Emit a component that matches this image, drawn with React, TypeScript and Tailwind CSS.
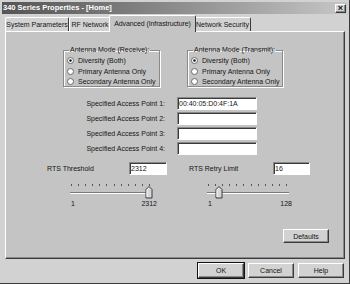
const FONT = "font-['Liberation_Sans',Arial,sans-serif]";

const raised =
  "border border-t-white border-l-white border-r-[#3a3a3a] border-b-[#3a3a3a] shadow-[inset_-1px_-1px_0_#8a8a8a]";
const sunken =
  "border border-t-[#8a8a8a] border-l-[#8a8a8a] border-r-white border-b-white shadow-[inset_1px_1px_0_#3a3a3a] bg-white";

const TABS = [
  { label: "System Parameters", w: "w-[64px]" },
  { label: "RF Network", w: "w-[42px]" },
  { label: "Advanced (Infrastructure)", w: "w-[87px]", active: true },
  { label: "Network Security", w: "w-[57px]" },
];

const RADIOS = ["Diversity (Both)", "Primary Antenna Only", "Secondary Antenna Only"];

function Radio({ checked }: { checked?: boolean }) {
  return (
    <svg width="7" height="7" viewBox="0 0 7 7" className="shrink-0">
      <circle cx="3.5" cy="3.5" r="3" fill="#fff" stroke="#6a6a6a" strokeWidth="1" />
      {checked && <circle cx="3.5" cy="3.5" r="1.2" fill="#111" />}
    </svg>
  );
}

function GroupBox({ title, w }: { title: string; w: string }) {
  return (
    <fieldset
      className={`${w} h-[41px] border border-[#8a8a8a] shadow-[1px_1px_0_#fff,inset_1px_1px_0_#fff] px-[3px]`}
    >
      <legend className="ml-[2px] px-[1px] leading-[8px]">{title}</legend>
      <div className="flex flex-col gap-[3px] pt-[3px]">
        {RADIOS.map((r, i) => (
          <div key={r} className="flex items-center gap-[4px] h-[7.5px]">
            <Radio checked={i === 0} />
            <span>{r}</span>
          </div>
        ))}
      </div>
    </fieldset>
  );
}

function Field({ value, w }: { value?: string; w: string }) {
  return (
    <div className={`${w} h-[13px] ${sunken} flex items-center pl-[1px]`}>
      {value}
    </div>
  );
}

function Slider({ thumb, max, w }: { thumb: number; max: string; w: string }) {
  const ticks = Array.from({ length: 12 }, (_, i) => 2 + (i * 78) / 11);
  return (
    <div className={`${w} flex flex-col`}>
      <svg width="84" height="15" viewBox="0 0 84 15">
        {ticks.map((x) => (
          <rect key={x} x={Math.round(x)} y="0" width="1" height="2" fill="#555" />
        ))}
        <rect x="1" y="8" width="82" height="1" fill="#7a7a7a" />
        <rect x="1" y="9" width="82" height="1" fill="#fff" />
        <polygon
          points={`${thumb - 3},14 ${thumb - 3},5.5 ${thumb},2.5 ${thumb + 3},5.5 ${thumb + 3},14`}
          fill="#d6d6d6"
          stroke="#3a3a3a"
          strokeWidth="1"
        />
        <polyline
          points={`${thumb - 2},13 ${thumb - 2},6 ${thumb},4`}
          fill="none"
          stroke="#fff"
          strokeWidth="1"
        />
      </svg>
      <div className="flex justify-between pl-[2px] mt-[1px]">
        <span>1</span>
        <span>{max}</span>
      </div>
    </div>
  );
}

export default function App() {
  return (
    <div
      className={`w-[350px] h-[284px] bg-[#d2d2d2] p-[2px] border-r border-b border-[#3a3a3a] text-[#151515] ${FONT} text-[7px] leading-none whitespace-nowrap overflow-hidden`}
    >
      {/* title bar */}
      <div className="h-[12px] flex items-center justify-between bg-gradient-to-r from-[#555] via-[#8c8c8c] to-[#c6c6c6] pl-[1px] pr-[1px]">
        <span className="text-white font-bold text-[7.5px]">340 Series Properties - [Home]</span>
        <div className={`w-[11px] h-[9px] bg-[#d4d4d4] ${raised} flex items-center justify-center text-[9px] font-bold leading-none`}>
          ×
        </div>
      </div>

      <div className="mt-[1px] ml-[3px] w-[340px]">
        {/* tabs */}
        <div className="h-[16px] flex items-end">
          {TABS.map((t) =>
            t.active ? (
              <div
                key={t.label}
                className={`${t.w} -mx-[2px] -mb-px h-[17px] relative z-10 bg-[#c4c4c4] border-t border-l border-r border-t-white border-l-white border-r-[#3a3a3a] rounded-t-[2px] flex items-start justify-center pt-[4px] tracking-[-0.1px]`}
              >
                {t.label}
              </div>
            ) : (
              <div
                key={t.label}
                className={`${t.w} h-[14px] border-t border-l border-r border-t-white border-l-white border-r-[#3a3a3a] rounded-t-[2px] flex items-center justify-center`}
              >
                {t.label}
              </div>
            )
          )}
        </div>

        {/* panel */}
        <div className="h-[228px] bg-[#c4c4c4] border border-t-white border-l-white border-r-[#3a3a3a] border-b-[#3a3a3a] shadow-[inset_-1px_-1px_0_#8a8a8a] flex flex-col">
          <div className="flex mt-[14px] ml-[57px] gap-[27px]">
            <GroupBox title="Antenna Mode (Receive):" w="w-[97px]" />
            <GroupBox title="Antenna Mode (Transmit):" w="w-[95px]" />
          </div>

          <div className="flex flex-col gap-[2px] mt-[10px]">
            {["", "", "", ""].map((_, i) => (
              <div key={i} className="flex items-center gap-[12px]">
                <span className="w-[159px] text-right">Specified Access Point {i + 1}:</span>
                <Field w="w-[80px]" value={i === 0 ? "00:40:05:D0:4F:1A" : ""} />
              </div>
            ))}
          </div>

          <div className="flex items-center mt-[7px] ml-[41px]">
            <span className="w-[82px]">RTS Threshold</span>
            <Field w="w-[38px]" value="2312" />
            <span className="w-[84px] ml-[22px]">RTS Retry Limit</span>
            <Field w="w-[37px]" value="16" />
          </div>

          <div className="flex mt-[9px] ml-[63px] gap-[49px]">
            <Slider thumb={80} max="2312" w="w-[88px]" />
            <Slider thumb={13} max="128" w="w-[86px]" />
          </div>

          <div className="flex justify-end mt-[22px] mr-[15px]">
            <div className={`w-[46px] h-[14px] bg-[#d2d2d2] ${raised} flex items-center justify-center`}>
              Defaults
            </div>
          </div>
        </div>
      </div>

      {/* buttons */}
      <div className="flex justify-end gap-[4px] mt-[4px] pr-[3px]">
        <div className={`w-[46px] h-[15px] bg-[#d2d2d2] ${raised} outline outline-1 outline-[#111] flex items-center justify-center`}>
          OK
        </div>
        <div className={`w-[46px] h-[15px] bg-[#d2d2d2] ${raised} flex items-center justify-center`}>
          Cancel
        </div>
        <div className={`w-[46px] h-[15px] bg-[#d2d2d2] ${raised} flex items-center justify-center`}>
          Help
        </div>
      </div>
    </div>
  );
}
